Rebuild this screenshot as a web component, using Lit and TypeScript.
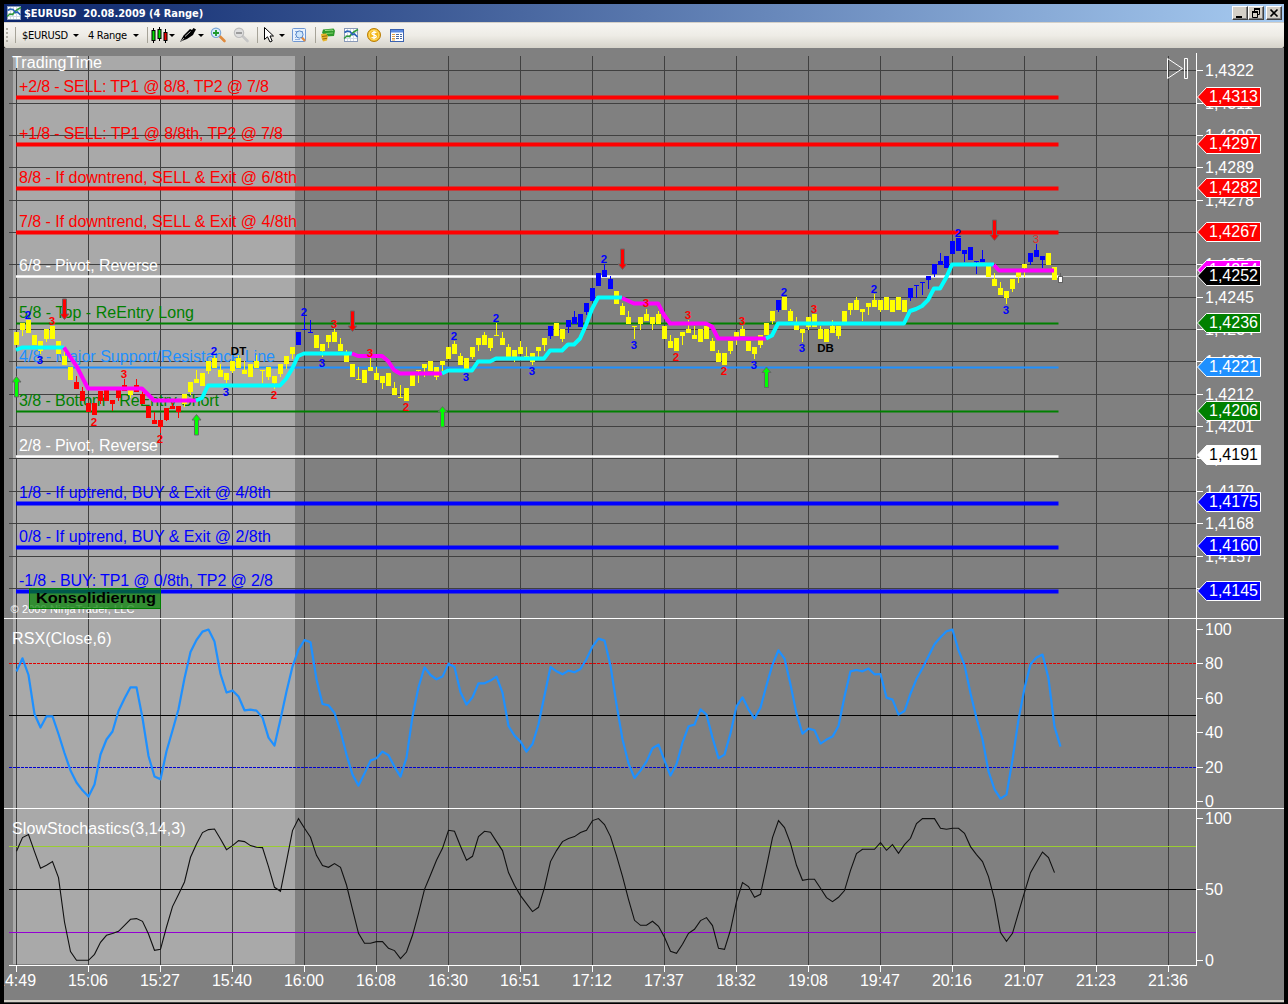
import { LitElement, html, svg, css } from "lit";
import { customElement, property } from "lit/decorators.js";

// high, body top, body bottom, low, in chart units. One bar every 6 units.
type Bar = [number, number, number, number];

const BARS: Bar[] = [
  [332, 332, 345, 345], [323, 323, 330, 336], [320, 320, 333, 333], [335, 335, 345, 345],
  [341, 341, 351, 354], [329, 329, 339, 342], [326, 326, 339, 339], [341, 341, 354, 354],
  [348, 356, 365, 365], [367, 367, 380, 380], [376, 382, 389, 389], [387, 391, 401, 401],
  [403, 403, 412, 412], [403, 403, 415, 415], [391, 391, 401, 404], [390, 390, 401, 401],
  [400, 400, 404, 411], [390, 390, 398, 401], [379, 385, 391, 391], [390, 390, 395, 398],
  [379, 385, 392, 392], [391, 394, 404, 404], [406, 406, 418, 418], [412, 420, 424, 424],
  [420, 420, 427, 433], [408, 408, 420, 421], [403, 406, 409, 409], [406, 406, 412, 418],
  [394, 394, 404, 407], [382, 382, 392, 395], [370, 379, 383, 383], [373, 373, 386, 386],
  [361, 361, 371, 374], [356, 358, 368, 368], [364, 370, 377, 377], [373, 373, 380, 383],
  [361, 361, 371, 373], [355, 358, 368, 368], [361, 370, 374, 374], [364, 364, 377, 377],
  [355, 361, 368, 368], [370, 370, 371, 383], [367, 367, 377, 380], [376, 376, 383, 389],
  [364, 364, 374, 377], [356, 356, 364, 369], [347, 347, 354, 359], [332, 332, 345, 345],
  [317, 329, 330, 330], [320, 332, 333, 333], [335, 335, 348, 348], [344, 344, 351, 357],
  [335, 335, 342, 348], [329, 332, 342, 342], [338, 344, 351, 351], [350, 352, 362, 362],
  [364, 364, 377, 377], [367, 379, 380, 380], [370, 370, 383, 383], [357, 367, 371, 371],
  [367, 373, 380, 380], [376, 376, 383, 389], [373, 373, 386, 386], [382, 388, 395, 395],
  [385, 397, 398, 398], [388, 388, 401, 401], [375, 375, 386, 386], [370, 370, 371, 383],
  [364, 364, 368, 377], [361, 361, 371, 371], [367, 367, 377, 380], [361, 361, 365, 371],
  [347, 347, 359, 359], [341, 344, 354, 354], [353, 356, 365, 365], [358, 358, 369, 369],
  [347, 347, 357, 359], [338, 338, 345, 351], [332, 335, 345, 345], [338, 338, 348, 351],
  [323, 335, 336, 336], [332, 338, 345, 345], [344, 347, 357, 357], [350, 350, 359, 362],
  [341, 347, 354, 354], [347, 356, 357, 357], [353, 353, 362, 365], [347, 347, 351, 357],
  [338, 338, 345, 351], [326, 326, 336, 339], [323, 323, 336, 336], [329, 329, 339, 342],
  [320, 320, 327, 333], [311, 317, 324, 324], [314, 314, 327, 327], [303, 303, 312, 315],
  [288, 288, 301, 301], [273, 273, 286, 286], [264, 270, 277, 277], [276, 279, 289, 289],
  [291, 291, 304, 304], [303, 306, 315, 315], [311, 317, 324, 324], [326, 326, 327, 339],
  [317, 317, 324, 330], [309, 314, 321, 321], [317, 317, 324, 330], [311, 314, 324, 324],
  [326, 326, 339, 339], [335, 341, 348, 348], [338, 338, 351, 351], [332, 332, 336, 345],
  [320, 329, 333, 333], [326, 335, 339, 339], [329, 329, 342, 342], [326, 326, 339, 339],
  [338, 341, 351, 351], [350, 353, 362, 362], [353, 353, 365, 365], [341, 341, 351, 354],
  [332, 332, 340, 345], [326, 329, 336, 336], [341, 341, 351, 351], [347, 347, 354, 359],
  [335, 335, 345, 348], [323, 323, 335, 335], [311, 311, 321, 324], [300, 300, 310, 312],
  [297, 297, 310, 310], [309, 311, 321, 321], [317, 322, 330, 330], [329, 329, 333, 342],
  [317, 317, 327, 330], [314, 314, 327, 327], [326, 329, 339, 339], [329, 329, 342, 342],
  [320, 326, 333, 333], [326, 326, 336, 339], [311, 311, 322, 322], [303, 303, 310, 315],
  [297, 300, 310, 310], [309, 309, 312, 321], [303, 303, 307, 315], [294, 300, 307, 307],
  [300, 300, 310, 312], [297, 297, 310, 310], [300, 300, 312, 312], [297, 297, 310, 310],
  [300, 300, 312, 312], [288, 288, 298, 301], [285, 285, 286, 298], [282, 282, 283, 295],
  [276, 276, 280, 289], [264, 264, 274, 277], [253, 261, 265, 265], [256, 256, 268, 268],
  [241, 241, 254, 254], [238, 238, 251, 251], [250, 250, 254, 262], [247, 247, 260, 260],
  [261, 261, 262, 274], [250, 259, 262, 262], [266, 266, 277, 277], [273, 279, 286, 286],
  [282, 288, 295, 295], [291, 291, 298, 304], [279, 279, 289, 292], [272, 272, 277, 283],
  [264, 264, 268, 277], [253, 253, 262, 265], [244, 250, 257, 257], [256, 256, 260, 268],
  [253, 253, 265, 265], [267, 267, 280, 280],
];

const RED_RANGES = [[10, 18], [20, 27]];
const BLUE_RANGES = [[47, 49], [89, 89], [92, 99], [127, 127], [149, 161], [169, 171]];

const RSX = [
  671.5, 658.3, 675, 714, 727.5, 716.3, 716.3, 734, 753, 770.5, 782.5, 790.3, 796.6, 784.5, 754.5,
  739.5, 731.5, 711, 698.5, 687.3, 687.3, 718, 756, 776.5, 779.3, 751.3, 730.5, 709.3, 678.3, 652,
  640, 631.6, 629.5, 641.6, 674, 692.5, 690.6, 696.5, 710.3, 709.6, 710.6, 717.6, 737.6, 745.6, 719.3,
  691.6, 666.6, 649.6, 640, 642.3, 679.3, 704, 705.3, 713, 731.3, 754.6, 774.6, 785.6, 773.6, 760.6,
  758.3, 751.6, 755.3, 766.6, 776.6, 757.6, 716.3, 687.3, 667.3, 675, 679.3, 676.6, 663.6, 667, 692.3,
  704.6, 697.3, 683.3, 683.3, 680.6, 676.6, 692.6, 726, 735.6, 741.6, 751.6, 744, 724.3, 695.3, 667,
  671.3, 674.3, 670.6, 672.3, 669, 659, 646.6, 638.6, 640.6, 665.6, 704.3, 739.3, 763.3, 778, 770.6,
  761.6, 748.3, 744.6, 760.6, 775.6, 764.3, 742.6, 726.3, 724.6, 709.3, 714.6, 737.6, 758.3, 754.6, 733.3,
  706.3, 697.3, 709.3, 718.6, 707.6, 685.3, 664.6, 650.3, 658.6, 684.6, 713.6, 733.6, 728.6, 730.3, 743.6,
  739.6, 736.6, 726, 696.6, 671.3, 670, 671.3, 668.6, 674.3, 674, 697.6, 699.6, 714.6, 711, 693.6,
  679, 668.3, 656.3, 644.3, 637.3, 631.3, 629.6, 650.3, 665, 693.3, 718.3, 739.3, 771.3, 789.3, 798.6,
  794.6, 759.6, 719.6, 688.3, 664.3, 657.6, 654.6, 678.3, 726.6, 746.6,
];

const STOCH = [
  851.3, 837.6, 834.6, 851.6, 868.3, 865.3, 861.6, 877.6, 922, 951.6, 960.3, 960.3, 960.3, 954.3, 942.3,
  935.3, 933.6, 931.3, 925.3, 919.3, 918.6, 921.3, 934, 950.3, 949.3, 927, 906.6, 894.6, 882, 857.3,
  844, 832.6, 829.6, 829, 839, 849.6, 845.6, 840.6, 841.6, 845.6, 847.3, 847.6, 866.6, 887.3, 891.3,
  861.3, 830.6, 818.6, 828.3, 837.3, 855.3, 865.6, 867.3, 863.6, 867.3, 885, 909.3, 933.3, 943.3, 943.3,
  941.6, 941.6, 948.3, 950.6, 958.6, 952, 935.3, 913.3, 889.3, 875, 860.3, 848.3, 830.3, 831.3, 846.3,
  860.3, 856.3, 836.6, 831.3, 832.3, 841.6, 850.6, 872.6, 885.3, 895.6, 903.6, 911.6, 907.3, 887.6, 861.6,
  850.6, 841.6, 838.6, 836.6, 832.6, 830.3, 820.6, 818.6, 824.6, 836.6, 855.6, 876.3, 899.3, 920.3, 925.3,
  925.3, 921.3, 926.3, 937.3, 951.3, 953.3, 944.3, 933.3, 929.3, 920.6, 917.6, 925.6, 948.3, 949.3, 930,
  901.6, 882.6, 886.6, 897.3, 894.3, 866.6, 837.6, 820.6, 827.6, 843.3, 865.3, 880.3, 879.3, 879.3, 888.3,
  897.6, 901.6, 897.3, 890.6, 870.3, 853.6, 849.3, 849.3, 849.3, 842.6, 850.3, 844.6, 853.3, 844.6, 838.3,
  823.6, 818.6, 818.6, 818.6, 828.3, 829.3, 828.3, 828.3, 833.3, 846.6, 854.6, 861.6, 876.6, 899.3, 932.6,
  941.3, 933.3, 912.6, 892.3, 872.6, 862.3, 852, 857.6, 872.6,
];

const LEVELS = [
  { y: 97.5, kind: "red", width: 250, text: "+2/8 - SELL: TP1 @ 8/8, TP2 @ 7/8" },
  { y: 144.5, kind: "red", width: 264, text: "+1/8 - SELL: TP1 @ 8/8th, TP2 @ 7/8" },
  { y: 188.5, kind: "red", width: 278, text: "8/8 - If downtrend, SELL & Exit @ 6/8th" },
  { y: 232.5, kind: "red", width: 278, text: "7/8 - If downtrend, SELL & Exit @ 4/8th" },
  { y: 276.5, kind: "white", width: 139, text: "6/8 - Pivot, Reverse" },
  { y: 323.5, kind: "green", width: 175, text: "5/8 - Top - ReEntry Long" },
  { y: 367.5, kind: "sky", width: 256, text: "4/8 - Major Support/Resistance Line" },
  { y: 411.5, kind: "green", width: 200, text: "3/8 - Bottom - ReEntry Short" },
  { y: 456.5, kind: "white", width: 139, text: "2/8 - Pivot, Reverse" },
  { y: 503.5, kind: "blue", width: 252, text: "1/8 - If uptrend, BUY & Exit @ 4/8th" },
  { y: 547.5, kind: "blue", width: 252, text: "0/8 - If uptrend, BUY & Exit @ 2/8th" },
  { y: 591.5, kind: "blue", width: 254, text: "-1/8 - BUY: TP1 @ 0/8th, TP2 @ 2/8" },
];

const PRICE_TICKS: [number, string][] = [
  [70.5, "1,4322"], [103.5, "1,4311"], [135.5, "1,4300"], [167.5, "1,4289"],
  [200.5, "1,4278"], [232.5, "1,4267"], [264.5, "1,4256"], [297.5, "1,4245"],
  [329.5, "1,4234"], [361.5, "1,4223"], [394.5, "1,4212"], [426.5, "1,4201"],
  [458.5, "1,4190"], [491.5, "1,4179"], [523.5, "1,4168"], [556.5, "1,4157"],
  [588.5, "1,4146"],
];

const OSC_TICKS: [number, string][] = [
  [629.5, "100"], [663.5, "80"], [698.5, "60"], [732.5, "40"], [767.5, "20"], [801.5, "0"],
  [818.5, "100"], [889.5, "50"], [960.5, "0"],
];

const TAGS: [number, string, string][] = [
  [97, "1,4313", "red"], [144, "1,4297", "red"], [188, "1,4282", "red"], [232, "1,4267", "red"],
  [270, "1,4254", "magenta"], [276, "1,4252", "black"], [323, "1,4236", "green"],
  [367, "1,4221", "sky"], [411, "1,4206", "green"], [455, "1,4191", "white"],
  [502, "1,4175", "blue"], [546, "1,4160", "blue"], [591, "1,4145", "blue"],
];

const TIMES = [
  "14:49", "15:06", "15:27", "15:40", "16:00", "16:08", "16:30", "16:51", "17:12",
  "17:37", "18:32", "19:08", "19:47", "20:16", "21:07", "21:23", "21:36",
];

const TREND: [string, string][] = [
  ["up", "16,350 22,347.5 64,347.5"],
  ["down", "64,347.5 77,367 88,388.5 142,388.5 154,400.5 196,400.5"],
  ["up", "196,400.5 202,398 208,385.5 280,385.5 286,379 292,369 298,356 304,353.5 352,353.5"],
  ["down", "352,353.5 358,356 382,356 388,361 394,370 400,373.5 442,373.5"],
  ["up", "442,373.5 448,370.5 472,370.5 478,361.5 490,361.5 496,358.5 544,358.5 550,350.5 562,350.5 568,344.5 574,344.5 580,338.5 586,325 592,309 598,297.5 622,297.5"],
  ["down", "622,298 634,303.5 658,303.5 664,315 670,323.5 706,323.5 712,326.5 718,338.5 766,338.5"],
  ["up", "766,338.5 772,335.5 778,323.5 904,323.5 910,311 916,309 922,306 928,300 934,288.5 940,288.5 946,278 952,264.5 994,264.5"],
  ["down", "994,265 999,270.5 1054,270.5"],
];

const SWINGS: [number, number, string, string][] = [
  [28, 318.5, "2", "blue"], [52, 324.5, "3", "red"], [40, 363.5, "3", "blue"],
  [94, 425.5, "2", "red"], [124, 377.5, "3", "red"], [160, 442.5, "2", "red"],
  [214, 354.5, "2", "blue"], [226, 395.5, "3", "blue"], [238.5, 354.5, "DT", "black"],
  [274, 399, "2", "red"], [304, 315.5, "2", "blue"], [334, 327.5, "3", "red"],
  [322, 366.5, "3", "blue"], [370, 356.5, "3", "red"], [406, 410.5, "2", "red"],
  [454, 339.5, "2", "blue"], [466, 380.5, "3", "blue"], [496, 321.5, "2", "blue"],
  [532, 374.5, "3", "blue"], [604, 262.5, "2", "blue"], [634, 348.5, "3", "blue"],
  [646, 306.5, "3", "red"], [676, 360.5, "2", "red"], [688, 318.5, "3", "red"],
  [724, 374.5, "2", "red"], [742, 324.5, "3", "red"], [754, 368.5, "3", "blue"],
  [784, 295.5, "2", "blue"], [802, 351.5, "3", "blue"], [814, 312.5, "3", "red"],
  [825.5, 351.5, "DB", "black"], [874, 292.5, "2", "blue"], [958, 236.5, "2", "blue"],
  [1006, 313.5, "3", "blue"], [1036, 242.5, "3", "faint"],
];

// tip position of every signal arrow
const SELLS = [[64.5, 320], [352.5, 332], [622.5, 270], [994.5, 241]];
const BUYS = [[16.5, 376.5], [196.5, 414.5], [442.5, 406.5], [766.5, 367]];

const inRanges = (n: number, ranges: number[][]) => ranges.some(([a, b]) => n >= a && n <= b);
const barX = (n: number) => 16 + n * 6;

@customElement("range-chart")
export class RangeChart extends LitElement {
  static styles = css`
    :host {
      display: block;
      background: #808080;
    }
    svg {
      display: block;
      width: 100%;
      height: 100%;
      font-family: "Liberation Sans", Arial, sans-serif;
      font-size: 16px;
    }
    .crisp { shape-rendering: crispEdges; }
    .session { fill: #a9a9a9; }
    .grid { stroke: #404040; fill: none; }
    .axis { stroke: #fff; fill: none; }
    .label { fill: #fff; }
    .mid { text-anchor: middle; }
    .small { font-size: 11px; }
    .line { fill: none; }
    .line.red, .line.blue { stroke-width: 4; }
    .line.white { stroke-width: 2.6; }
    .line.green, .line.sky { stroke-width: 2.2; }
    .line.red { stroke: #f00; }
    .line.blue { stroke: #00f; }
    .line.green { stroke: #008000; }
    .line.sky { stroke: #1e90ff; }
    .line.white { stroke: #fff; }
    text.red, .bar.red, .tag.red { fill: #f00; }
    text.blue, .bar.blue, .tag.blue { fill: #00f; }
    text.green, .tag.green { fill: #008000; }
    text.sky, .tag.sky { fill: #1e90ff; }
    text.white, .tag.white { fill: #fff; }
    .tag.black, text.black { fill: #000; }
    .tag.magenta { fill: #f0f; }
    text.faint { fill: #e02828; font-weight: normal; }
    .bar.yellow { fill: #ff0; }
    .tag { stroke: #fff; }
    .trend {
      fill: none;
      stroke-width: 4;
      stroke-linejoin: round;
    }
    .trend.up { stroke: #0ff; }
    .trend.down { stroke: #f0f; }
    .swing {
      font-size: 11.5px;
      font-weight: bold;
      text-anchor: middle;
    }
    .arrow { stroke: #666; stroke-width: 1; }
    .arrow.sell { fill: #f00; }
    .arrow.buy { fill: #0f0; }
    .price { stroke: #c8c8c8; }
    .rsx {
      fill: none;
      stroke: #1e90ff;
      stroke-width: 2.2;
      stroke-linejoin: round;
    }
    .stoch {
      fill: none;
      stroke: #101010;
      stroke-width: 1.1;
    }
    .zero { stroke: #000; }
    .over { stroke: #e00000; stroke-dasharray: 3 1; }
    .under { stroke: #0000d0; stroke-dasharray: 3 1; }
    .upper { stroke: #9acd32; }
    .lower { stroke: #9400d3; }
    .note { fill: rgba(0, 128, 0, 0.7); stroke: #008000; }
    .note-text { font-weight: bold; font-size: 15px; }
  `;

  renderGrid() {
    return svg`
      <g class="grid crisp">
        ${TIMES.map((_, i) => {
          const x = 16.5 + i * 72;
          return svg`<path d="M${x} 56V618M${x} 619V808M${x} 809V965" />`;
        })}
        ${PRICE_TICKS.map(([y]) => svg`<path d="M9 ${y}H1196" />`)}
      </g>`;
  }

  renderLevels() {
    return LEVELS.map((l) => svg`
      <text class=${l.kind} x="19" y=${l.y - 5.5} textLength=${l.width}>${l.text}</text>
      <path class="line ${l.kind}" d="M16 ${l.y}H1058.5" />`);
  }

  renderBar(bar: Bar, n: number) {
    const [high, top, bottom, low] = bar;
    const x = barX(n);
    const color = inRanges(n, RED_RANGES) ? "red" : inRanges(n, BLUE_RANGES) ? "blue" : "yellow";
    return svg`
      <path class="bar ${color}" d="M${x - 2} ${top}h5V${bottom}h-5zM${x} ${high}h1V${low}h-1z" />`;
  }

  renderArrows() {
    return svg`
      ${SELLS.map(([x, y]) => svg`
        <path class="arrow sell" d="M${x - 2} ${y - 21}h4v15h2.500l-4.500 5.500l-4.500 -5.500h2.500z" />`)}
      ${BUYS.map(([x, y]) => svg`
        <path class="arrow buy" d="M${x - 2} ${y + 20.5}h4v-15h2.500l-4.500 -5.500l-4.500 5.500h2.500z" />`)}`;
  }

  renderAxes() {
    return svg`
      <g class="axis crisp">
        <path d="M4 618.5H1284M4 808.5H1284M9 965.5H1197M1196.5 53V966" />
        ${TIMES.map((_, i) => svg`<path d="M${16.5 + i * 72} 965V972" />`)}
        ${[...PRICE_TICKS, ...OSC_TICKS].map(([y]) => svg`<path d="M1197 ${y}H1203" />`)}
      </g>
      ${PRICE_TICKS.slice(0, -1).map(([y, t]) => svg`<text class="label" x="1205" y=${y + 5.9}>${t}</text>`)}
      ${OSC_TICKS.map(([y, t]) => svg`<text class="label" x="1205" y=${y + 5.5}>${t}</text>`)}
      ${TIMES.map((t, i) => svg`<text class="label mid" x=${16 + i * 72} y="986">${t}</text>`)}`;
  }

  renderTag(y: number, text: string, kind: string) {
    return svg`
      <path class="tag ${kind}" d="M1197.5 ${y}L1206.5 ${y - 9.5}H1260.5V${y + 9.5}H1206.5Z" />
      <text class=${kind === "white" ? "black" : "label"} x="1209" y=${y + 5}>${text}</text>`;
  }

  renderSeries(name: string, values: number[]) {
    return svg`
      <polyline class=${name} points=${values.map((y, i) => `${barX(i) + 0.5},${y}`).join(" ")} />`;
  }

  render() {
    return html`
      <svg viewBox="4 48 1280 952">
        <rect class="session crisp" x="13" y="56" width="282" height="908" />
        ${this.renderGrid()}
        <text class="label" x="12" y="68" textLength="90">TradingTime</text>
        <text class="label small" x="10.5" y="612.5" textLength="124">© 2009 NinjaTrader, LLC</text>
        ${this.renderLevels()}
        <path class="price crisp" d="M1059 276.5H1197" />
        <g class="crisp">${BARS.map((b, n) => this.renderBar(b, n))}</g>
        <path d="M1060.5 273V278" stroke="#606060" />
        <rect x="1058.5" y="276.5" width="4" height="6" fill="#fff" stroke="#606060" />
        ${TREND.map(([dir, pts]) => svg`<polyline class="trend ${dir}" points=${pts} />`)}
        ${this.renderArrows()}
        ${SWINGS.map(([x, y, t, c]) => svg`<text class="swing ${c}" x=${x} y=${y}>${t}</text>`)}
        <rect class="note" x="29.5" y="588.5" width="131" height="20" />
        <text class="note-text" x="36" y="603" textLength="120" lengthAdjust="spacingAndGlyphs">Konsolidierung</text>
        <path class="axis" d="M1167.5 58.5V78.5L1182.5 68.5ZM1184.5 58.5h3v20h-3z" />

        <g class="crisp">
          <path class="over" d="M9 663.5H1196" />
          <path class="zero" d="M9 715.5H1196M9 889.5H1196" />
          <path class="under" d="M9 767.5H1196" />
          <path class="upper" d="M9 846.5H1196" />
          <path class="lower" d="M9 932.5H1196" />
        </g>
        ${this.renderSeries("rsx", RSX)}
        ${this.renderSeries("stoch", STOCH)}
        <text class="label" x="12" y="644" textLength="99.5">RSX(Close,6)</text>
        <text class="label" x="12" y="834" textLength="173.5">SlowStochastics(3,14,3)</text>

        ${this.renderAxes()}
        ${TAGS.map(([y, t, k]) => this.renderTag(y, t, k))}
      </svg>
    `;
  }
}

const ICONS: Record<string, unknown> = {
  chart: svg`
    <rect x="1.5" y="1.5" width="13" height="13" fill="#fff" stroke="#8a9ab8" />
    <path d="M4.5 2v12M7.5 2v12M10.5 2v12M2 5.5h12M2 8.5h12M2 11.5h12" stroke="#d3dbe8" />
    <path d="M1 11.5L4 9L6.5 9.5L9.5 6L11.500 4.500L15 2.500" stroke="#2f9a3c" stroke-width="1.6" fill="none" />
    <path d="M1.500 5.500L4 4L7 4.500L9.500 7.500L11.500 7L14.500 10" stroke="#2a62b8" stroke-width="1.6" fill="none" />`,
  candles: svg`
    <path d="M2.500 1v15M8.500 0v14M14.500 2v14" stroke="#000" />
    <rect x="1" y="3.500" width="3" height="10" fill="#0d0" stroke="#000" />
    <rect x="7" y="2.500" width="3" height="9" fill="#0d0" stroke="#000" />
    <rect x="13" y="5.500" width="3" height="8" fill="#e00" stroke="#000" />`,
  pen: svg`
    <path d="M0 15L3.500 8.500L10 2L12 3L13.500 1L16 2.500L14.500 5L13 8L7 12L3 13.500z" fill="#000" />
    <path d="M5 9.500L10.500 4.500" stroke="#bbb" />
    <path d="M1 14.500L4 11" stroke="#ddd" stroke-width=".8" />`,
  zoomIn: svg`
    <path d="M10 9.500L14.500 14" stroke="#e08a3c" stroke-width="2.600" stroke-linecap="round" />
    <circle cx="6" cy="5.800" r="4.700" fill="#d8ecfb" stroke="#7ba6d6" stroke-width="1.100" />
    <path d="M6 3v6M3 6h6" stroke="#1f9a2c" stroke-width="1.800" />`,
  zoomOut: svg`
    <path d="M10 9.500L14.500 14" stroke="#c6c6c6" stroke-width="2.600" stroke-linecap="round" />
    <circle cx="6" cy="5.800" r="4.700" fill="#dedede" stroke="#bcbcbc" stroke-width="1.100" />
    <path d="M3 6h6" stroke="#8c8c8c" stroke-width="1.600" />`,
  cursor: svg`
    <path d="M.5 .5V12.500L3.500 9.800L6 15L8.200 14L6 9H9.500z" fill="#fff" stroke="#000" />`,
  find: svg`
    <rect x="1.500" y="1.500" width="13" height="13" rx="1" fill="#e8f1fc" stroke="#6f97d2" />
    <path d="M4 4.500h8M4 12.500h5M4 7.500h1M4 10.500h1" stroke="#8fb0e0" />
    <path d="M10.500 10L14 14" stroke="#e08a3c" stroke-width="2.200" />
    <circle cx="8.500" cy="7.500" r="3.600" fill="#cfe6fb" stroke="#5585c8" />`,
  money: svg`
    <path d="M3 2.500L13.500 1.500L15 3.500L14 9L6 9.500L2 6z" fill="#2f9a2c" />
    <path d="M5 3.500L12.500 3L13 4" stroke="#9fe08a" fill="none" />
    <path d="M6 6.500L13 6" stroke="#7fd06a" />
    <path d="M1 7L6 6.500L8 9L7 13.500L3 14.500L1.500 11z" fill="#e8b52c" />
    <path d="M2 9.500L7 8.800M2.500 12L7 11.300" stroke="#96690c" />`,
  coin: svg`
    <circle cx="8" cy="8" r="6.500" fill="#f4b81c" stroke="#b87d08" />
    <circle cx="8" cy="8" r="4.900" fill="none" stroke="#ffdf70" />
    <path d="M10.300 5.800C9.500 4.700 5.900 4.600 5.900 6.500C5.900 8.300 10.300 7.600 10.300 9.600C10.300 11.400 6.500 11.400 5.600 10M8 3.700V12.300" stroke="#fff" stroke-width="1.300" fill="none" />`,
  table: svg`
    <rect x="1.500" y="2.500" width="13" height="12" fill="#fff" stroke="#3a62b0" />
    <rect x="2" y="3" width="12" height="2.500" fill="#5a8ae0" />
    <path d="M3 7.500h3M3 9.500h3M3 11.500h3M3 13h3" stroke="#e0a040" />
    <path d="M7 7.500h3M7 9.500h3M7 11.500h3M11 7.500h2M11 9.500h2M11 11.500h2" stroke="#4a6aa0" />`,
  minimize: svg`<path d="M4 10h6v2H4z" />`,
  restore: svg`
    <path d="M6.500 3v5.500h5V3" stroke="#000" fill="none" />
    <path d="M6 2h6v2H6z" />
    <path d="M4.500 6v5.500h5V6" stroke="#000" fill="#d4d0c8" />
    <path d="M4 5h6v2H4z" />`,
  close: svg`<path d="M4.500 3.500L11.500 10.500M11.500 3.500L4.500 10.500" stroke="#000" stroke-width="1.700" />`,
};

@customElement("tool-icon")
export class ToolIcon extends LitElement {
  @property() name = "chart";

  static styles = css`
    :host {
      display: block;
      width: 17px;
      height: 16px;
    }
    svg {
      display: block;
      overflow: visible;
    }
  `;

  render() {
    return html`<svg width="17" height="16" viewBox="0 0 17 16">${ICONS[this.name]}</svg>`;
  }
}

@customElement("app-root")
export class AppRoot extends LitElement {
  static styles = css`
    :host {
      display: flex;
      flex-direction: column;
      box-sizing: border-box;
      width: 1288px;
      height: 1004px;
      padding: 4px 4px 0;
      background: #000;
      font-family: "DejaVu Sans Condensed", "DejaVu Sans", sans-serif;
      font-size: 11px;
      overflow: hidden;
    }
    .title {
      display: flex;
      align-items: center;
      box-sizing: border-box;
      height: 18px;
      padding: 0 2px;
      background: linear-gradient(90deg, #0a246a, #a6caf0);
      color: #fff;
      font-weight: bold;
    }
    .caption {
      flex: 1;
      margin-left: 1px;
      white-space: pre;
      letter-spacing: -0.03px;
    }
    .btn {
      box-sizing: border-box;
      width: 16px;
      height: 14px;
      background: #d4d0c8;
      border: 1px solid;
      border-color: #fff #404040 #404040 #fff;
      box-shadow: inset -1px -1px #808080;
    }
    .btn tool-icon {
      margin: -1px;
    }
    .btn.close {
      margin-left: 2px;
    }
    .toolbar {
      display: grid;
      grid-template-columns: 9px 7px 51px 15px 45px 14px 4px 18px 11px 18px 12px 23px 24px 7px 15px 12px 24px 5px 23px 23px 23px 16px;
      align-items: center;
      box-sizing: border-box;
      height: 26px;
      padding: 0 0 1px 2px;
      border-top: 1px solid #d4d0c8;
      border-radius: 0 0 2px 2px;
      background: linear-gradient(#f6f5f2, #eeece6 50%, #d6d3ca);
      color: #000;
    }
    .text {
      white-space: nowrap;
      letter-spacing: -0.3px;
    }
    .grip {
      width: 2px;
      height: 15px;
      background: repeating-linear-gradient(#b0ada4 0 2px, transparent 2px 4px);
    }
    .sep {
      width: 1px;
      height: 16px;
      background: #a6a398;
    }
    .drop {
      width: 0;
      border: 3px solid transparent;
      border-top-color: #000;
      border-bottom: 0;
    }
    range-chart {
      height: 952px;
    }
    .status {
      height: 2px;
      background: #d4d0c8;
      border-bottom: 1px solid #404040;
    }
  `;

  render() {
    return html`
      <div class="title">
        <tool-icon name="chart"></tool-icon>
        <span class="caption">$EURUSD  20.08.2009 (4 Range)</span>
        <div class="btn"><tool-icon name="minimize"></tool-icon></div>
        <div class="btn"><tool-icon name="restore"></tool-icon></div>
        <div class="btn close"><tool-icon name="close"></tool-icon></div>
      </div>
      <div class="toolbar">
        <i class="grip"></i>
        <i class="sep"></i>
        <span class="text">$EURUSD</span>
        <i class="drop"></i>
        <span class="text">4 Range</span>
        <i class="drop"></i>
        <i class="sep"></i>
        <tool-icon name="candles"></tool-icon>
        <i class="drop"></i>
        <tool-icon name="pen"></tool-icon>
        <i class="drop"></i>
        <tool-icon name="zoomIn"></tool-icon>
        <tool-icon name="zoomOut"></tool-icon>
        <i class="sep"></i>
        <tool-icon name="cursor"></tool-icon>
        <i class="drop"></i>
        <tool-icon name="find"></tool-icon>
        <i class="sep"></i>
        <tool-icon name="money"></tool-icon>
        <tool-icon name="chart"></tool-icon>
        <tool-icon name="coin"></tool-icon>
        <tool-icon name="table"></tool-icon>
      </div>
      <range-chart></range-chart>
      <div class="status"></div>
    `;
  }
}
